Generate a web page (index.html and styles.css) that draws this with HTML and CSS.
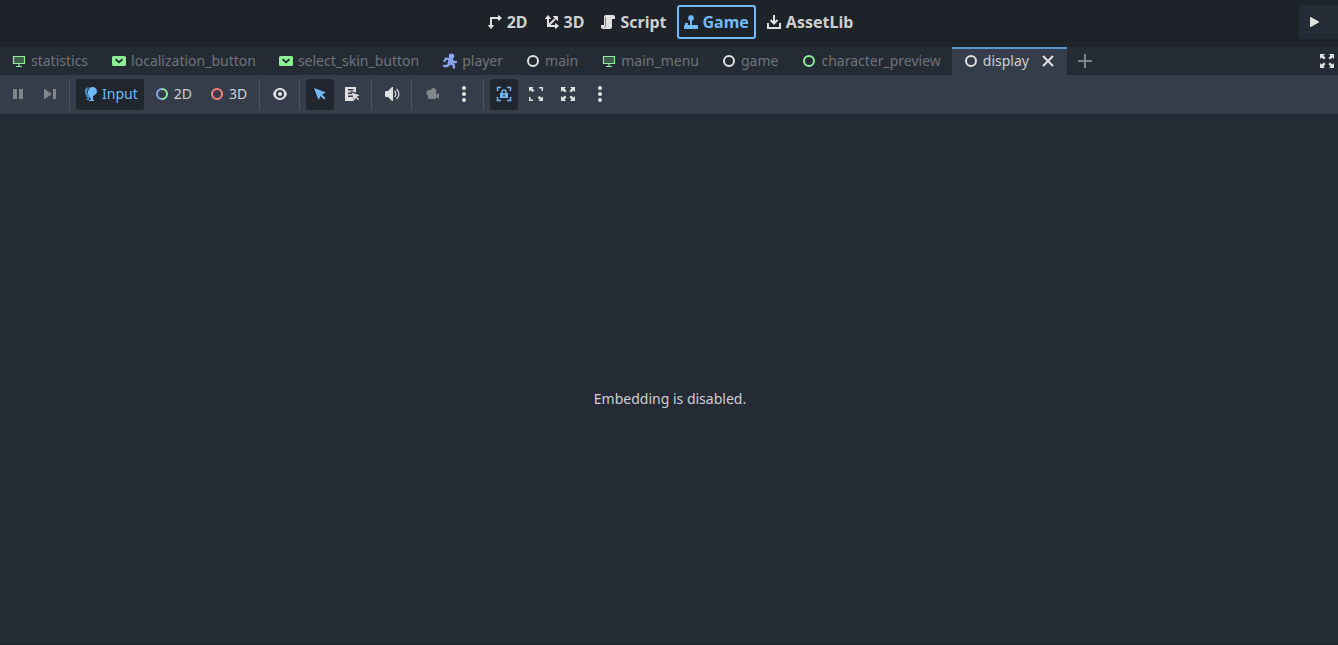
FILE: index.html
```html
<!DOCTYPE html>
<html lang="en">
<head>
<meta charset="utf-8">
<title>Game</title>
<link rel="stylesheet" href="styles.css">
</head>
<body>
<svg class="sprite" aria-hidden="true">
  <symbol id="ring" viewBox="0 0 16 16"><circle cx="8" cy="8" r="5" fill="none" stroke="currentColor" stroke-width="2"/></symbol>
  <symbol id="screen" viewBox="0 0 16 16"><path d="M2 3h12v8H2z" fill="currentColor" fill-opacity=".25" stroke="none"/><path d="M2.500 3.500h11v7h-11zM8 10.500v3M5 13.500h6" fill="none" stroke="currentColor" stroke-width="1.200"/></symbol>
  <symbol id="option" viewBox="0 0 16 16"><path fill="currentColor" fill-rule="evenodd" d="M2.500 3h11A1.500 1.500 0 0 1 15 4.500v7a1.500 1.500 0 0 1-1.500 1.500h-11A1.500 1.500 0 0 1 1 11.500v-7A1.500 1.500 0 0 1 2.500 3zM5 5.500 4 6.900 8 10.400l4-3.500-1-1.400-3 2.500z"/></symbol>
  <symbol id="runner" viewBox="0 0 16 16"><circle cx="9.500" cy="3.200" r="2.700" fill="currentColor"/><path d="M8.500 6.500 4 5.500 2.500 8M9.500 7.500l2 1.500H14M8 10.500l3.500 1.200.500 2.800M7.500 10.500 5.500 13H2" fill="none" stroke="currentColor" stroke-width="2.300" stroke-linecap="round" stroke-linejoin="round"/><path d="m7 5.500 4 1-2 5-3-1z" fill="currentColor" stroke="currentColor"/></symbol>
  <symbol id="expand" viewBox="0 0 16 16"><path fill="currentColor" d="M1 1h5L4.500 2.500 6.500 5 5 6.500 2.500 4.500 1 6zM15 1v5l-1.500-1.500L11 6.500 9.500 5l2-2.500L10 1zM1 15v-5l1.500 1.500L5 9.500 6.500 11l-2 2.500L6 15zM15 15h-5l1.500-1.500-2-2.500L11 9.500l2.500 2L15 10z"/></symbol>
  <symbol id="dots" viewBox="0 0 16 16"><g fill="currentColor"><circle cx="8" cy="2" r="2"/><circle cx="8" cy="8" r="2"/><circle cx="8" cy="14" r="2"/></g></symbol>
</svg>

<header class="topbar">
  <nav class="workspaces">
    <button class="workspace"><svg class="icon" viewBox="0 0 16 16"><path d="M4 12V4h8" fill="none" stroke="currentColor" stroke-width="2"/><path fill="currentColor" stroke="currentColor" stroke-linejoin="round" d="M1.500 11.500h5L4 14.500zM11.500 1.500v5L14.500 4z"/></svg>2D</button>
    <button class="workspace"><svg class="icon" viewBox="0 0 16 16"><path d="M4 4v8h8M4 12l7-7" fill="none" stroke="currentColor" stroke-width="2"/><path fill="currentColor" stroke="currentColor" stroke-linejoin="round" d="M1.500 4.500h5L4 1.500zM11.500 9.500v5l3-2.500zM9.500 2.500h4v4z"/></svg>3D</button>
    <button class="workspace"><svg class="icon" viewBox="0 0 16 16"><path fill="currentColor" d="M6 1a2 2 0 0 0-2 2v8H1v2a2 2 0 0 0 2 2h7a2 2 0 0 0 2-2V5h3V3a2 2 0 0 0-2-2z"/><path d="M5.500 3v9.500a1 1 0 0 1-1.500.500" fill="none" stroke="#1e2228" stroke-width=".5"/></svg>Script</button>
    <button class="workspace workspace-active"><svg class="icon" viewBox="0 0 16 16"><path fill="currentColor" d="M8 1a3 3 0 0 0-1 5.800V11H5V9H2v2a1 1 0 0 0-1 1v3h14v-3a1 1 0 0 0-1-1H9V6.800A3 3 0 0 0 8 1z"/></svg>Game</button>
    <button class="workspace"><svg class="icon" viewBox="0 0 16 16"><path d="M8 1v8M4.500 6 8 9.500 11.500 6M2 9v5h12V9" fill="none" stroke="currentColor" stroke-width="2"/></svg>AssetLib</button>
  </nav>
  <button class="play" aria-label="Run project"><svg class="icon" viewBox="0 0 16 16"><path fill="currentColor" d="M4 3.500v9a.5.5 0 0 0 .8.400l8-4.500a.5.5 0 0 0 0-.800l-8-4.500a.5.5 0 0 0-.8.400z"/></svg></button>
</header>

<div class="scenes">
  <div class="tabs" role="tablist">
    <button class="tab" role="tab"><svg class="icon green"><use href="#screen"/></svg>statistics</button>
    <button class="tab" role="tab"><svg class="icon green"><use href="#option"/></svg>localization_button</button>
    <button class="tab" role="tab"><svg class="icon green"><use href="#option"/></svg>select_skin_button</button>
    <button class="tab" role="tab"><svg class="icon blue"><use href="#runner"/></svg>player</button>
    <button class="tab" role="tab"><svg class="icon light"><use href="#ring"/></svg>main</button>
    <button class="tab" role="tab"><svg class="icon green"><use href="#screen"/></svg>main_menu</button>
    <button class="tab" role="tab"><svg class="icon light"><use href="#ring"/></svg>game</button>
    <button class="tab" role="tab"><svg class="icon green"><use href="#ring"/></svg>character_preview</button>
    <div class="tab-current">
      <button class="tab tab-label" role="tab" aria-selected="true"><svg class="icon light"><use href="#ring"/></svg>display</button>
      <button class="close" aria-label="Close tab"><svg class="icon" viewBox="0 0 16 16"><path d="m3 3 10 10M13 3 3 13" stroke="currentColor" stroke-width="2"/></svg></button>
    </div>
    <button class="add" aria-label="New scene"><svg class="icon" viewBox="0 0 16 16"><path d="M8 1v14M1 8h14" stroke="currentColor" stroke-width="2"/></svg></button>
  </div>
  <button class="distraction" aria-label="Distraction free mode"><svg class="icon"><use href="#expand"/></svg></button>
</div>

<div class="toolbar" role="toolbar">
  <button class="tool" disabled aria-label="Pause"><svg class="icon" viewBox="0 0 16 16"><path fill="currentColor" d="M3 3h4v10H3zM9 3h4v10H9z"/></svg></button>
  <button class="tool" disabled aria-label="Next frame"><svg class="icon" viewBox="0 0 16 16"><path fill="currentColor" d="M2 3.500v9q0 .800.800.400l6.500-4.300q.700-.600 0-1.200L2.800 3.100Q2 2.700 2 3.500zM11 3h3v10h-3z"/></svg></button>
  <span class="separator"></span>
  <button class="tool tool-active"><svg class="icon" viewBox="0 0 16 16"><path fill="#4384b8" d="M7 1.200C4 1 2.500 3 2.700 5.500c.1 2 1.300 3 1.300 4.500v1h1.500L5 13H4v1h3V9L5.500 8.500z"/><path fill="currentColor" d="M10.500 1A4.500 4.500 0 0 0 6 5.500L5.500 8.500 7 9v2.500h1.500V14H7v1h5v-1h-1v-3.500c.5-1.500 4-2 4-5A4.500 4.500 0 0 0 10.500 1z"/><path d="M7 2.200Q5.300 4 5.300 7" fill="none" stroke="#21262e" stroke-width=".7"/></svg>Input</button>
  <button class="tool tool-mode"><svg class="icon" viewBox="0 0 16 16"><g fill="none" stroke-width="2"><path stroke="#8da5f3" d="M8 13A5 5 0 0 1 8 3"/><path stroke="#8eef97" d="M8 3a5 5 0 0 1 0 10"/></g></svg>2D</button>
  <button class="tool tool-mode"><svg class="icon red"><use href="#ring"/></svg>3D</button>
  <span class="separator"></span>
  <button class="tool" aria-label="Toggle selection visibility"><svg class="icon" viewBox="0 0 16 16"><path fill="currentColor" fill-rule="evenodd" d="M8 2C4.500 2 2 4.500 1 8c1 3.500 3.500 6 7 6s6-2.500 7-6c-1-3.500-3.500-6-7-6zm0 2a4 4 0 1 1 0 8 4 4 0 0 1 0-8zm0 2a2 2 0 1 0 0 4 2 2 0 0 0 0-4z"/></svg></button>
  <span class="separator"></span>
  <button class="tool tool-active" aria-label="Select"><svg class="icon" viewBox="0 0 16 16"><path fill="currentColor" d="m2 2 4.500 12 2-4 3.500 3.500 1.500-1.500L10 8.500l4-2z"/></svg></button>
  <button class="tool" aria-label="List select"><svg class="icon" viewBox="0 0 16 16"><path fill="currentColor" fill-rule="evenodd" d="M1 1h11v5.500L6.500 5l.500 1.500H4V8h3.500l.500 1.500H4V11h4.700l.8 2 .5 2H1zM4 3v1.500h5.500V3z"/><path fill="currentColor" d="m7.500 6.500 2.800 8 1.400-2.800 2.500 2.500 1-1-2.500-2.500 2.800-1.400z"/></svg></button>
  <span class="separator"></span>
  <button class="tool" aria-label="Mute"><svg class="icon" viewBox="0 0 16 16"><path fill="currentColor" d="M8 1 4 5H2a1 1 0 0 0-1 1v4a1 1 0 0 0 1 1h2l4 4h1V1z"/><path d="M10.500 5a4 4 0 0 1 0 6M12.500 3a6.500 6.500 0 0 1 0 10" fill="none" stroke="currentColor" stroke-width="1.200"/></svg></button>
  <span class="separator"></span>
  <button class="tool" disabled aria-label="Override camera"><svg class="icon" viewBox="0 0 16 16"><path fill="currentColor" d="M9.500 2A3 3 0 0 0 6.600 4.300 2.800 2.800 0 1 0 4 9.500V12a1 1 0 0 0 1 1h6a1 1 0 0 0 1-1v-1l3 2V7l-3 2V6.500A3 3 0 0 0 9.500 2z"/></svg></button>
  <button class="tool" aria-label="Camera options"><svg class="icon"><use href="#dots"/></svg></button>
  <span class="separator"></span>
  <button class="tool tool-active" aria-label="Fixed size"><svg class="icon" viewBox="0 0 16 16"><path d="M1.500 5V1.500H5M11 1.500h3.500V5M14.500 11v3.500H11M5 14.500H1.500V11" fill="none" stroke="currentColor" stroke-width="1.500"/><path d="M6 8V6a2 2 0 0 1 4 0v2" fill="none" stroke="currentColor" stroke-width="1.300"/><path fill="currentColor" fill-rule="evenodd" d="M4 7h8v5H4zm3.300 1.500v2h1.400v-2z"/></svg></button>
  <button class="tool" aria-label="Keep aspect ratio"><svg class="icon" viewBox="0 0 16 16"><path fill="currentColor" d="M1 1h4.500L4.300 2.300l2 2.200-1.600 1.600-2.400-1.800L1 5.500zM15 15h-4.500l1.200-1.300-2-2.200 1.600-1.600 2.400 1.800 1.300-1.200z"/><path d="M11 1.800h3.200V5M5 14.200H1.800V11" fill="none" stroke="currentColor" stroke-width="1.500"/></svg></button>
  <button class="tool" aria-label="Stretch"><svg class="icon"><use href="#expand"/></svg></button>
  <button class="tool" aria-label="Embedding options"><svg class="icon"><use href="#dots"/></svg></button>
</div>

<main class="viewport"><p class="message">Embedding is disabled.</p></main>
</body>
</html>
```
FILE: styles.css
```css
* { box-sizing: border-box; }

body {
  margin: 0;
  min-height: 100vh;
  display: flex;
  flex-direction: column;
  background: #252b34;
  color: #cdcfd2;
  font: 14px/20px "Noto Sans", sans-serif;
}

button {
  display: flex;
  align-items: center;
  gap: 4px;
  margin: 0;
  padding: 0;
  border: 0;
  background: none;
  color: inherit;
  font: inherit;
  white-space: nowrap;
}

.sprite { position: absolute; width: 0; height: 0; }
.icon { width: 16px; height: 16px; flex: none; color: #e0e0e0; }
.green { color: #8eef97; }
.blue { color: #8da5f3; }
.red { color: #fc7f7f; }

.topbar {
  display: grid;
  grid-template-columns: 1fr auto 1fr;
  align-items: start;
  padding: 5px 0 0 2px;
  height: 47px;
  background: #1e2229;
}
.workspaces { grid-column: 2; display: flex; gap: 4px; }
.workspace {
  height: 34px;
  padding: 0 6px;
  font-size: 16px;
  font-weight: 700;
}
.workspace-active {
  border: 2px solid #70bafa;
  border-radius: 3px;
  padding: 0 5px 0 4px;
  color: #70bafa;
}
.workspace-active .icon { color: inherit; }
.play {
  justify-self: end;
  height: 34px;
  width: 39px;
  padding-left: 7px;
  border-radius: 3px 0 0 3px;
  background: #252b34;
}

.scenes {
  display: flex;
  justify-content: space-between;
  height: 28px;
  background: #252b34;
}
.tabs { display: flex; color: #6f737a; }
.tab { padding: 0 12px 0 11px; }
.tab:nth-child(even) { padding-right: 11px; }
.tab-current {
  display: flex;
  padding-right: 11px;
  border-top: 2px solid #5896ce;
  background: #363d4a;
  color: #cdcfd2;
}
.tab-label { padding-right: 11px; margin-top: -2px; }
.close { margin-top: -2px; }
.add { padding-left: 10px; }
.add .icon { color: #808388; }
.distraction { padding-right: 3px; }

.toolbar {
  display: flex;
  gap: 4px;
  padding: 4px;
  height: 39px;
  background: #363d4a;
}
.tool { padding: 0 6px 1px; border-radius: 3px; }
.tool-mode { padding-right: 7px; }
.tool:disabled .icon { color: #80848b; }
.tool-active { background: #21262e; color: #70bafa; }
.tool-active .icon { color: inherit; }
.separator { width: 4px; display: flex; padding-left: 1px; }
.separator::before { content: ""; width: 1px; background: #4d535f; }

.viewport {
  flex: 1;
  display: flex;
  align-items: center;
  justify-content: center;
  padding: 40px 0 0 2px;
  border-bottom: 1px solid #1e2229;
}
.message { margin: 0; }
```
